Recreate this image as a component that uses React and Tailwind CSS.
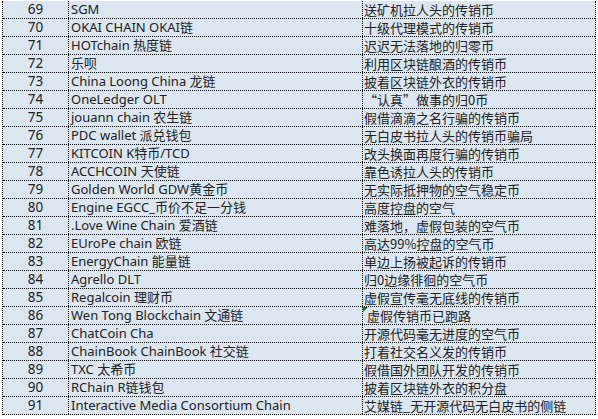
const rows = [
  [69, "SGM", "送矿机拉人头的传销币"],
  [70, "OKAI CHAIN OKAI链", "十级代理模式的传销币"],
  [71, "HOTchain 热度链", "迟迟无法落地的归零币"],
  [72, "乐呗", "利用区块链酿酒的传销币"],
  [73, "China Loong China 龙链", "披着区块链外衣的传销币"],
  [74, "OneLedger OLT", "“认真”做事的归0币"],
  [75, "jouann chain 农生链", "假借滴滴之名行骗的传销币"],
  [76, "PDC wallet 派兑钱包", "无白皮书拉人头的传销币骗局"],
  [77, "KITCOIN K特币/TCD", "改头换面再度行骗的传销币"],
  [78, "ACCHCOIN 天使链", "靠色诱拉人头的传销币"],
  [79, "Golden World GDW黄金币", "无实际抵押物的空气稳定币"],
  [80, "Engine EGCC_币价不足一分钱", "高度控盘的空气"],
  [81, ".Love Wine Chain 爱酒链", "难落地，虚假包装的空气币"],
  [82, "EUroPe chain 欧链", "高达99%控盘的空气币"],
  [83, "EnergyChain 能量链", "单边上扬被起诉的传销币"],
  [84, "Agrello DLT", "归0边缘徘徊的空气币"],
  [85, "Regalcoin 理财币", "虚假宣传毫无底线的传销币"],
  [86, "Wen Tong Blockchain 文通链", " 虚假传销币已跑路", true],
  [87, "ChatCoin Cha", "开源代码毫无进度的空气币"],
  [88, "ChainBook ChainBook 社交链", "打着社交名义发的传销币"],
  [89, "TXC 太希币", "假借国外团队开发的传销币"],
  [90, "RChain R链钱包", "披着区块链外衣的积分盘"],
  [91, "Interactive Media Consortium Chain", "艾媒链_无开源代码无白皮书的侧链"],
];

export default function App() {
  return (
    <div
      className="w-[598px] h-[419px] overflow-hidden bg-white pt-px text-[13px] text-[#222]"
      style={{ fontFamily: '"Noto Sans", "Noto Sans CJK SC", sans-serif' }}
    >
      <div className="ml-[2px] w-[594px] border-x border-dotted border-black bg-[#dce6f1]">
        {rows.map(([num, name, desc, flag]) => (
          <div key={num} className="flex h-[18px] border-b border-dotted border-black leading-[17px]">
            <div className="w-[66px] shrink-0 border-r border-dotted border-black text-center text-[13.5px]">{num}</div>
            <div className="w-[294px] shrink-0 border-r border-dotted border-black pl-[2px] whitespace-nowrap overflow-hidden">
              {name}
            </div>
            <div className="relative flex-1 pl-[1px] whitespace-pre overflow-hidden font-['Noto_Sans_CJK_SC',sans-serif]">
              {flag && (
                <span className="absolute left-0 top-0 w-0 h-0 border-t-[5px] border-r-[5px] border-t-[#008000] border-r-transparent" />
              )}
              {desc}
            </div>
          </div>
        ))}
      </div>
    </div>
  );
}
